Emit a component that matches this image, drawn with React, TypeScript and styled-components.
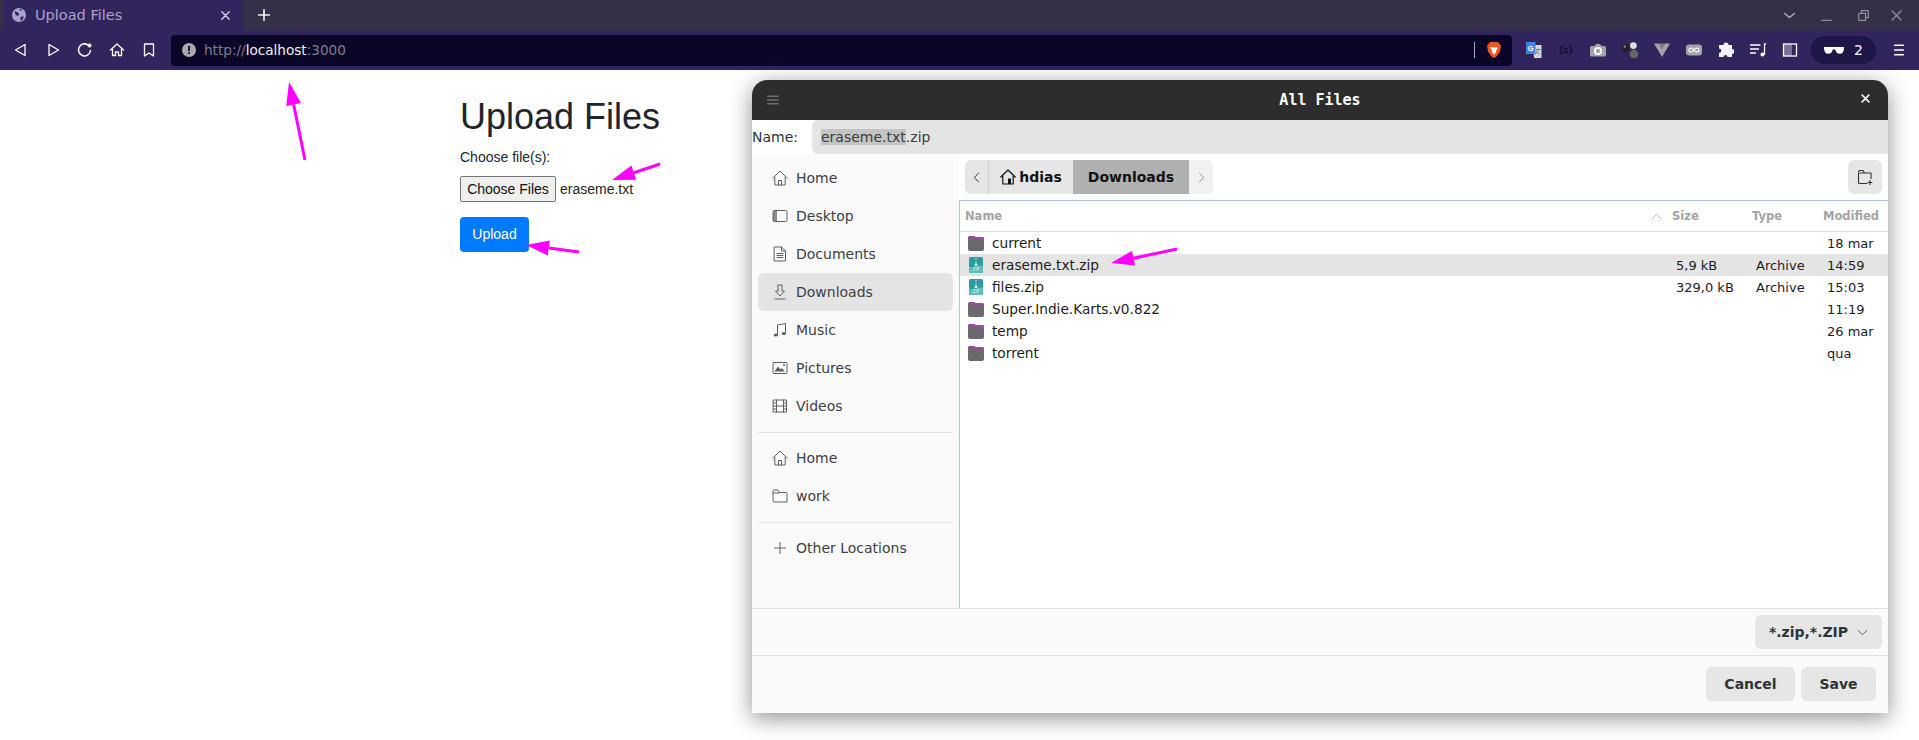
import React from "react";
import styled, { createGlobalStyle } from "styled-components";

const GlobalStyle = createGlobalStyle`
  html, body { margin: 0; padding: 0; background: #fff; }
  body { width: 1919px; height: 740px; overflow: hidden; font-family: "Liberation Sans", Arial, sans-serif; }
`;

const Page = styled.div`
  position: relative;
  width: 1919px;
  height: 740px;
  overflow: hidden;
`;

/* browser chrome */
const TabStrip = styled.div`
  height: 30px;
  background: #353048;
  display: flex;
  padding-left: 3px;
  align-items: stretch;
`;
const Tab = styled.div`
  width: 240px;
  background: #32255e;
  border-radius: 4px 4px 0 0;
  display: flex;
  align-items: center;
  padding: 0 13px 0 9px;
  box-sizing: border-box;
  color: #a9a3cc;
  font: 14.5px "DejaVu Sans", sans-serif;
`;
const TabTitle = styled.span`
  flex: 1;
  margin-left: 9px;
`;
const NewTab = styled.div`
  width: 40px;
  display: flex;
  align-items: center;
  justify-content: center;
  margin-left: 1px;
`;
const WindowControls = styled.div`
  margin-left: auto;
  display: flex;
  align-items: center;
  padding-right: 8px;
`;
const WinBtn = styled.div<{ $w: number }>`
  width: ${(p) => p.$w}px;
  display: flex;
  justify-content: center;
`;
const Toolbar = styled.div`
  height: 40px;
  background: #32255e;
  display: flex;
  align-items: center;
  padding-left: 5px;
`;
const ToolBtn = styled.div`
  width: 32px;
  height: 32px;
  display: flex;
  align-items: center;
  justify-content: center;
  flex: none;
`;
const UrlBar = styled.div`
  width: 1341px;
  height: 31px;
  margin: 0 6px;
  background: #090628;
  border-radius: 4px;
  display: flex;
  align-items: center;
  padding: 0 10px 0 11px;
  box-sizing: border-box;
  font: 13.6px "DejaVu Sans", sans-serif;
  color: #7f7c8f;
`;
const UrlText = styled.span`
  margin-left: 8px;
  flex: 1;
`;
const UrlHost = styled.span`
  color: #f3f2f8;
`;
const UrlDivider = styled.div`
  width: 1px;
  height: 16px;
  background: #a7a5b3;
  margin-right: 11px;
`;
const ShieldPill = styled.div`
  width: 65px;
  height: 28px;
  margin: 0 7px 0 5px;
  border-radius: 14px;
  background: #1e1647;
  display: flex;
  align-items: center;
  justify-content: center;
  gap: 10px;
  color: #fff;
  font: 14px "DejaVu Sans", sans-serif;
`;

/* page content */
const Content = styled.main`
  padding: 23px 0 0 460px;
  color: #212529;
`;
const Heading = styled.h1`
  margin: 0 0 7px;
  font: 400 36px/47px "Liberation Sans", Arial, sans-serif;
`;
const FieldLabel = styled.label`
  display: block;
  font-size: 14px;
  line-height: 21px;
  margin-bottom: 8px;
`;
const FileRow = styled.div`
  display: flex;
  align-items: center;
  font-size: 14px;
  color: #212529;
  margin-bottom: 15px;
`;
const FileButton = styled.div`
  width: 96px;
  height: 26px;
  box-sizing: border-box;
  border: 1px solid #767676;
  border-radius: 2px;
  background: #efefef;
  color: #111;
  font-size: 14px;
  line-height: 24px;
  text-align: center;
  margin-right: 4px;
`;
const UploadButton = styled.div`
  width: 69px;
  height: 35px;
  background: #007bff;
  border-radius: 4px;
  color: #fff;
  font-size: 14px;
  line-height: 35px;
  text-align: center;
`;

/* file dialog */
const Dialog = styled.section`
  position: absolute;
  left: 752px;
  top: 80px;
  width: 1136px;
  height: 633px;
  background: #fafafa;
  border-radius: 15px 15px 0 0;
  box-shadow: 0 5px 22px rgba(0, 0, 0, 0.45);
  display: flex;
  flex-direction: column;
  font: 14px "DejaVu Sans", sans-serif;
  color: #2e3436;
`;
const TitleBar = styled.header`
  height: 40px;
  flex: none;
  background: #2d2d2d;
  border-radius: 15px 15px 0 0;
  display: flex;
  align-items: center;
  justify-content: center;
  position: relative;
  color: #fff;
  font: 700 15px "DejaVu Sans Mono", monospace;
`;
const TitleIcon = styled.div<{ $side: "left" | "right"; $off: number }>`
  position: absolute;
  ${(p) => p.$side}: ${(p) => p.$off}px;
  top: 14px;
  display: flex;
`;
const NameRow = styled.div`
  height: 34px;
  flex: none;
  display: flex;
  align-items: center;
  background: #fff;
`;
const NameLabel = styled.div`
  width: 60px;
  flex: none;
  color: #2e3436;
`;
const NameInput = styled.div`
  flex: 1;
  height: 34px;
  background: #e4e4e4;
  border-radius: 6px 0 0 6px;
  display: flex;
  align-items: center;
  padding-left: 9px;
  color: #3a3d3f;
`;
const Selected = styled.span`
  background: #c4c4c4;
`;
const Body = styled.div`
  flex: 1;
  display: flex;
  min-height: 0;
  background: #fff;
`;
const Sidebar = styled.nav`
  width: 207px;
  flex: none;
  background: #fafafa;
  padding: 5px 6px 0;
  box-sizing: border-box;
`;
const PlaceItem = styled.div<{ $active?: boolean }>`
  height: 38px;
  margin-bottom: 0;
  display: flex;
  align-items: center;
  gap: 8px;
  padding-left: 14px;
  border-radius: 6px;
  background: ${(p) => (p.$active ? "#e4e4e4" : "transparent")};
  color: #3d4042;
`;
const Separator = styled.div`
  height: 1px;
  background: #e0e0e0;
  margin: 7px 0 6px;
`;
const Main = styled.div`
  flex: 1;
  display: flex;
  flex-direction: column;
  min-width: 0;
`;
const PathRow = styled.div`
  height: 46px;
  flex: none;
  display: flex;
  align-items: flex-start;
  padding: 6px 6px 0 6px;
  box-sizing: border-box;
  background: #fff;
`;
const PathGroup = styled.div`
  display: flex;
  height: 34px;
  border-radius: 6px;
  overflow: hidden;
  background: #e6e6e6;
`;
const PathSeg = styled.div<{ $w: number; $active?: boolean; $dim?: boolean; $line?: boolean }>`
  width: ${(p) => p.$w}px;
  display: flex;
  align-items: center;
  justify-content: center;
  gap: 3px;
  font-weight: 700;
  font-size: 14px;
  color: #111;
  background: ${(p) => (p.$active ? "#b0b0b0" : p.$dim ? "#f0f0f0" : "#e6e6e6")};
  border-right: ${(p) => (p.$line ? "1px solid #cfcfcf" : "none")};
  box-sizing: border-box;
`;
const NewFolderBtn = styled.div`
  margin-left: auto;
  width: 34px;
  height: 34px;
  border-radius: 6px;
  background: #e6e6e6;
  display: flex;
  align-items: center;
  justify-content: center;
`;
const ListFrame = styled.div`
  flex: 1;
  border-top: 1px solid #a6c6e8;
  border-left: 1px solid #a6c6e8;
  margin-left: 0;
  background: #fff;
  min-height: 0;
`;
const columns = "712px 80px 71px 64px";
const HeaderRow = styled.div`
  height: 31px;
  display: grid;
  grid-template-columns: ${columns};
  align-items: center;
  border-bottom: 1px solid #dcdcdc;
  box-sizing: border-box;
  font-weight: 700;
  font-size: 11.5px;
  color: #a3a3a3;
`;
const NameHead = styled.div`
  padding-left: 5px;
  display: flex;
  justify-content: space-between;
  align-items: center;
  padding-right: 10px;
`;
const FileRowItem = styled.div<{ $selected?: boolean }>`
  height: 22px;
  display: grid;
  grid-template-columns: ${columns};
  align-items: center;
  background: ${(p) => (p.$selected ? "#e4e4e4" : "transparent")};
  color: #1c1c1c;
  font-size: 13.7px;
`;
const NameCell = styled.div`
  display: flex;
  align-items: center;
  gap: 8px;
  padding-left: 8px;
`;
const MetaCell = styled.div`
  padding-left: 4px;
  white-space: nowrap;
  font-size: 13px;
`;
const FilterRow = styled.div`
  height: 47px;
  flex: none;
  border-top: 1px solid #e0e0e0;
  box-sizing: border-box;
  display: flex;
  justify-content: flex-end;
  align-items: flex-start;
  padding: 6px 6px 0 0;
`;
const FilterButton = styled.div`
  width: 127px;
  height: 34px;
  background: #e6e6e6;
  border-radius: 6px;
  display: flex;
  align-items: center;
  justify-content: center;
  gap: 9px;
  font-weight: 700;
  font-size: 14px;
  color: #2e3436;
`;
const ActionRow = styled.footer`
  height: 58px;
  flex: none;
  border-top: 1px solid #e0e0e0;
  box-sizing: border-box;
  display: flex;
  justify-content: flex-end;
  gap: 6px;
  padding: 11px 12px 0 0;
`;
const ActionButton = styled.div<{ $w: number }>`
  width: ${(p) => p.$w}px;
  height: 34px;
  background: #e6e6e6;
  border-radius: 6px;
  font-weight: 700;
  font-size: 14px;
  line-height: 34px;
  text-align: center;
  color: #2e3436;
`;
const ArrowLayer = styled.svg`
  position: absolute;
  inset: 0;
  pointer-events: none;
`;

const stroke = {
  fill: "none",
  stroke: "currentColor",
  strokeWidth: 1.3,
  strokeLinecap: "round" as const,
  strokeLinejoin: "round" as const,
};

const Icon = ({ size = 16, color = "#fff", children, box = 16 }: { size?: number; color?: string; children: React.ReactNode; box?: number }) => (
  <svg width={size} height={size} viewBox={`0 0 ${box} ${box}`} style={{ color, flex: "none" }}>
    {children}
  </svg>
);

const Globe = () => (
  <Icon size={14} color="#a9a3cc">
    <circle cx="8" cy="8" r="8" fill="#a9a3cc" />
    <path d="M3 3.5l4 1.5 1.5 2.500L6 9 4 7.500zM10 10l3.500-.5L12 13.500 9.500 14.500z" fill="#32255e" />
    <path d="M8 1l3.500.5L10 3.500z" fill="#32255e" />
  </Icon>
);
const PlaceIcon = ({ name }: { name: string }) => {
  const c = "#5d6062";
  const paths: Record<string, React.ReactNode> = {
    home: <path {...stroke} strokeWidth={1} d="M.8 8L8 1l7.200 7M2.800 7v8h10.400V7M6.500 15v-4.500h3V15" />,
    desktop: (
      <g>
        <rect x="1" y="2.500" width="14" height="11" rx="1.500" {...stroke} strokeWidth={1} />
        <path d="M1 4a1.500 1.500 0 0 1 1.500-1.500H5v11H2.500A1.500 1.500 0 0 1 1 12z" fill="currentColor" opacity=".7" />
      </g>
    ),
    documents: <path {...stroke} strokeWidth={1} d="M2.500 1h7l4 4v10h-11zM9.500 1v4h4M5 7.500h6M5 9.500h6M5 11.500h6" />,
    downloads: <path {...stroke} strokeWidth={1} d="M6 1h4v6h2.500L8 12 3.500 7H6zM3 15h10" />,
    music: (
      <g>
        <path {...stroke} strokeWidth={1} d="M5.500 13V3l8-1.500V11" />
        <ellipse cx="3.800" cy="13" rx="2" ry="1.500" fill="currentColor" />
        <ellipse cx="11.800" cy="11.500" rx="2" ry="1.500" fill="currentColor" />
      </g>
    ),
    pictures: (
      <g>
        <rect x="1" y="2.500" width="14" height="11" rx="1" {...stroke} strokeWidth={1} />
        <path d="M2.500 11.500L6 6.500l2.500 3L10 8l2.500 3.500z" fill="currentColor" />
        <circle cx="12" cy="5" r="1" fill="currentColor" />
      </g>
    ),
    videos: <path {...stroke} strokeWidth={1} d="M1.500 2h13v12h-13zM4.500 2v12M11.500 2v12M1.500 5h3M1.500 8h3M1.500 11h3M11.500 5h3M11.500 8h3M11.500 11h3M4.500 8h7" />,
    folder: <path {...stroke} strokeWidth={1} d="M1 3a1 1 0 0 1 1-1h4l1.500 2.500H14a1 1 0 0 1 1 1V14H2a1 1 0 0 1-1-1zM1 5h6.500" />,
    plus: <path {...stroke} strokeWidth={1} d="M8 2.500v11M2.500 8h11" />,
  };
  return <Icon color={c}>{paths[name]}</Icon>;
};
const FolderIcon = () => (
  <Icon>
    <path d="M0 3a2 2 0 0 1 2-2h4l1.500 1H14a2 2 0 0 1 2 2v10a2 2 0 0 1-2 2H2a2 2 0 0 1-2-2z" fill="#6d6a6f" />
    <path d="M0 3a2 2 0 0 1 2-2h4l1.500 1H14a2 2 0 0 1 2 2v.500H8L6.500 3.500H0z" fill="#9a4a9e" />
  </Icon>
);
const ZipIcon = () => (
  <Icon>
    <rect x="1" y="0" width="14" height="16" rx="1.500" fill="#2f9c9c" />
    <path d="M1 9.500C5 12 11 7 15 9v5.500a1.500 1.500 0 0 1-1.500 1.500h-11A1.500 1.500 0 0 1 1 14.500z" fill="#5dbdb9" />
    <path d="M8 1v1.500M8 4v1.500M7 7h2v1.500H7z" stroke="#fff" strokeWidth=".9" fill="none" />
    <text x="8" y="14.200" textAnchor="middle" fontSize="4.500" fontFamily="Liberation Sans" fill="#d8f3f2">ZIP</text>
  </Icon>
);
const Arrow = ({ x1, y1, x2, y2, head = 23, width = 15 }: { x1: number; y1: number; x2: number; y2: number; head?: number; width?: number }) => {
  const len = Math.hypot(x2 - x1, y2 - y1);
  const ux = (x2 - x1) / len;
  const uy = (y2 - y1) / len;
  const bx = x2 - ux * head;
  const by = y2 - uy * head;
  const pts = `${x2},${y2} ${bx - (uy * width) / 2},${by + (ux * width) / 2} ${bx + (uy * width) / 2},${by - (ux * width) / 2}`;
  return (
    <g>
      <line x1={x1} y1={y1} x2={bx} y2={by} stroke="#ff00ff" strokeWidth="3" />
      <polygon points={pts} fill="#ff00ff" />
    </g>
  );
};

const places = [
  { icon: "home", label: "Home" },
  { icon: "desktop", label: "Desktop" },
  { icon: "documents", label: "Documents" },
  { icon: "downloads", label: "Downloads", active: true },
  { icon: "music", label: "Music" },
  { icon: "pictures", label: "Pictures" },
  { icon: "videos", label: "Videos" },
];

const files = [
  { name: "current", modified: "18 mar" },
  { name: "eraseme.txt.zip", size: "5,9 kB", type: "Archive", modified: "14:59", zip: true, selected: true },
  { name: "files.zip", size: "329,0 kB", type: "Archive", modified: "15:03", zip: true },
  { name: "Super.Indie.Karts.v0.822", modified: "11:19" },
  { name: "temp", modified: "26 mar" },
  { name: "torrent", modified: "qua" },
];

export default function App() {
  return (
    <Page>
      <GlobalStyle />
      <TabStrip>
        <Tab>
          <Globe />
          <TabTitle>Upload Files</TabTitle>
          <Icon size={9} color="#d0cde0">
            <path {...stroke} strokeWidth={2.600} d="M1.500 1.500l13 13M14.500 1.500l-13 13" />
          </Icon>
        </Tab>
        <NewTab>
          <Icon size={12} color="#f2f2f2">
            <path {...stroke} strokeWidth={2.200} d="M8 1v14M1 8h14" />
          </Icon>
        </NewTab>
        <WindowControls>
          <WinBtn $w={37}>
            <Icon size={11} color="#b8b6c2"><path {...stroke} strokeWidth={1.800} d="M1 5l7 6 7-6" /></Icon>
          </WinBtn>
          <WinBtn $w={37}>
            <Icon size={11} color="#8f8c9c"><path {...stroke} strokeWidth={1.800} d="M1 15h14" /></Icon>
          </WinBtn>
          <WinBtn $w={37}>
            <Icon size={11} color="#8f8c9c"><path {...stroke} strokeWidth={1.800} d="M1 5h10v10H1zM5 5V1h10v10h-4" /></Icon>
          </WinBtn>
          <WinBtn $w={29}>
            <Icon size={11} color="#8f8c9c"><path {...stroke} strokeWidth={2} d="M1.500 1.500l13 13M14.500 1.500l-13 13" /></Icon>
          </WinBtn>
        </WindowControls>
      </TabStrip>
      <Toolbar>
        <ToolBtn><Icon><path {...stroke} d="M12 2.500v11L2.500 8z" /></Icon></ToolBtn>
        <ToolBtn><Icon><path {...stroke} d="M4 2.500v11L13.500 8z" /></Icon></ToolBtn>
        <ToolBtn>
          <Icon>
            <path {...stroke} strokeWidth={1.500} d="M13.500 8.500A6 6 0 1 1 11 3" />
            <circle cx="12.500" cy="3.500" r="2" fill="#fff" />
          </Icon>
        </ToolBtn>
        <ToolBtn><Icon><path {...stroke} d="M1.500 8L8 2l6.500 6M3.500 7v6.500h3V10h3v3.500h3V7" /></Icon></ToolBtn>
        <ToolBtn><Icon><path {...stroke} d="M3.500 2h9v12L8 11l-4.500 3z" /></Icon></ToolBtn>
        <UrlBar>
          <Icon size={14} color="#a8a8ad">
            <circle cx="8" cy="8" r="8" fill="#a8a8ad" />
            <path d="M8 3.500v5.500" stroke="#090628" strokeWidth="2" />
            <circle cx="8" cy="11.500" r="1.200" fill="#090628" />
          </Icon>
          <UrlText>http://<UrlHost>localhost</UrlHost>:3000</UrlText>
          <UrlDivider />
          <Icon>
            <path d="M4 0h8l2 2.500 1 1-1 6-3.500 5L8 16l-2.500-1.500L2 9.500l-1-6 1-1z" fill="#f1561d" />
            <path d="M4 5l3 .5h2L12 5l-1.500 3L9.500 11 8 12.500 6.500 11 5.500 8z" fill="#fff" />
          </Icon>
        </UrlBar>
        <ToolBtn>
          <Icon>
            <path d="M7 3h8.500v13H8z" fill="#d8d8d8" />
            <path d="M10 7.500h4.500M12 6.500c0 3-1 5-3 6M10.500 9c.7 1.700 2 2.800 3.500 3.300" stroke="#6a7a80" strokeWidth=".9" fill="none" />
            <rect x="0" y="0" width="9.500" height="12" fill="#3f84ea" />
            <text x="4.700" y="8.500" textAnchor="middle" fontSize="7.500" fontWeight="700" fontFamily="Liberation Sans" fill="#fff">G</text>
          </Icon>
        </ToolBtn>
        <ToolBtn>
          <Icon size={14} color="#17132e">
            <text x="8" y="11.500" textAnchor="middle" fontSize="9.500" fontWeight="700" fontFamily="DejaVu Sans Mono" fill="#0d0a1c">{"{≡}"}</text>
          </Icon>
        </ToolBtn>
        <ToolBtn>
          <Icon>
            <path d="M1.500 4h3l1.500-2h4l1.500 2h3a1.500 1.500 0 0 1 1.500 1.500V13a1.500 1.500 0 0 1-1.500 1.500h-13A1.500 1.500 0 0 1 0 13V5.500A1.500 1.500 0 0 1 1.500 4z" fill="#a3a3a8" />
            <circle cx="8" cy="9" r="3.200" fill="none" stroke="#fff" strokeWidth="1.800" />
          </Icon>
        </ToolBtn>
        <ToolBtn>
          <Icon size={18}>
            <circle cx="11" cy="4" r="3" fill="#ddd" />
            <circle cx="11.500" cy="11.500" r="3.800" fill="#666" />
            <circle cx="4" cy="6" r="3.500" fill="#222" />
            <circle cx="3.300" cy="5" r="1" fill="#999" />
          </Icon>
        </ToolBtn>
        <ToolBtn><Icon><path d="M0 1.500h5L8 7l3-5.500h5L8 15z" fill="#a3a3a8" /><path d="M5 1.500h6L8 7z" fill="#7f7f88" /></Icon></ToolBtn>
        <ToolBtn>
          <Icon>
            <rect x="0" y="2.500" width="16" height="11" rx="3" fill="#a3a3a8" />
            <path d="M8 8c-1-1.500-2-2-3-2a2 2 0 0 0 0 4c1 0 2-.5 3-2s2-2 3-2a2 2 0 0 1 0 4c-1 0-2-.5-3-2z" fill="none" stroke="#fff" strokeWidth="1.100" />
          </Icon>
        </ToolBtn>
        <ToolBtn>
          <Icon>
            <path d="M5.500 3a2.500 2.500 0 0 1 5 0H14v4a2.500 2.500 0 0 1 0 5v3H9.500a2 2 0 0 0-4 0H1v-4a2.200 2.200 0 0 0 0-4.500V3z" fill="#f4f3f8" />
          </Icon>
        </ToolBtn>
        <ToolBtn>
          <Icon>
            <path {...stroke} strokeWidth={1.300} d="M.5 3h9.500M.5 7h8M.5 11h5M14.500 2v10M14.500 2h1.500" />
            <circle cx="12.500" cy="12.500" r="2" fill="#fff" />
          </Icon>
        </ToolBtn>
        <ToolBtn>
          <Icon>
            <rect x="1.500" y="2" width="13" height="12" fill="none" stroke="#fff" strokeWidth="1.300" />
            <rect x="1.500" y="2" width="8.500" height="12" fill="#fff" opacity=".35" />
          </Icon>
        </ToolBtn>
        <ShieldPill>
          <Icon size={20}>
            <path d="M0 5.500h16v1.500c-.5 3-1.500 4-3.500 4S9.500 9.500 9 7.500H7C6.500 9.500 5.500 11 3.500 11S.5 10 0 7z" fill="#fff" />
          </Icon>
          2
        </ShieldPill>
        <ToolBtn>
          <Icon size={14}>
            <path {...stroke} strokeWidth={1.600} d="M3 2.500h10M3 8h10M3 13.500h10" />
          </Icon>
        </ToolBtn>
      </Toolbar>

      <Content>
        <Heading>Upload Files</Heading>
        <FieldLabel>Choose file(s):</FieldLabel>
        <FileRow>
          <FileButton>Choose Files</FileButton>
          eraseme.txt
        </FileRow>
        <UploadButton>Upload</UploadButton>
      </Content>

      <Dialog>
        <TitleBar>
          <TitleIcon $side="left" $off={15}>
            <Icon size={12} color="#6f6f6f"><path {...stroke} strokeWidth={1.800} d="M1 3h14M1 8h14M1 13h14" /></Icon>
          </TitleIcon>
          All Files
          <TitleIcon $side="right" $off={18}>
            <Icon size={9} color="#fff"><path {...stroke} strokeWidth={2.800} d="M2 2l12 12M14 2L2 14" /></Icon>
          </TitleIcon>
        </TitleBar>
        <NameRow>
          <NameLabel>Name:</NameLabel>
          <NameInput><Selected>eraseme.txt</Selected>.zip</NameInput>
        </NameRow>
        <Body>
          <Sidebar>
            {places.map((p) => (
              <PlaceItem key={p.label} $active={p.active}>
                <PlaceIcon name={p.icon} />
                {p.label}
              </PlaceItem>
            ))}
            <Separator />
            <PlaceItem><PlaceIcon name="home" />Home</PlaceItem>
            <PlaceItem><PlaceIcon name="folder" />work</PlaceItem>
            <Separator />
            <PlaceItem><PlaceIcon name="plus" />Other Locations</PlaceItem>
          </Sidebar>
          <Main>
            <PathRow>
              <PathGroup>
                <PathSeg $w={24} $line>
                  <Icon size={11} color="#222"><path {...stroke} strokeWidth={1.300} d="M11 1.500L5 8l6 6.500" /></Icon>
                </PathSeg>
                <PathSeg $w={84}>
                  <Icon color="#111"><path {...stroke} strokeWidth={1.200} d="M.8 8L8 1l7.200 7M2.800 6.500V15h10.400V6.500" /><rect x="8" y="9.500" width="3" height="5.500" fill="#111" /></Icon>
                  hdias
                </PathSeg>
                <PathSeg $w={116} $active>Downloads</PathSeg>
                <PathSeg $w={24} $dim>
                  <Icon size={11} color="#8a8a8a"><path {...stroke} strokeWidth={1.300} d="M5 1.500L11 8l-6 6.500" /></Icon>
                </PathSeg>
              </PathGroup>
              <NewFolderBtn>
                <Icon color="#2e3436"><path {...stroke} strokeWidth={1.100} d="M1.500 2.500a1 1 0 0 1 1-1h3.500L7.500 4H14v5.500M1.500 4v9.500a1 1 0 0 0 1 1H10M1.500 4H7.500M13 11.500v4M11 13.500h4" /></Icon>
              </NewFolderBtn>
            </PathRow>
            <ListFrame>
              <HeaderRow>
                <NameHead>
                  Name
                  <Icon size={11} color="#a3a3a3"><path {...stroke} strokeWidth={1.200} d="M2 11l6-6 6 6" /></Icon>
                </NameHead>
                <div>Size</div>
                <div>Type</div>
                <div>Modified</div>
              </HeaderRow>
              {files.map((f) => (
                <FileRowItem key={f.name} $selected={f.selected}>
                  <NameCell>
                    {f.zip ? <ZipIcon /> : <FolderIcon />}
                    {f.name}
                  </NameCell>
                  <MetaCell>{f.size}</MetaCell>
                  <MetaCell>{f.type}</MetaCell>
                  <MetaCell>{f.modified}</MetaCell>
                </FileRowItem>
              ))}
            </ListFrame>
          </Main>
        </Body>
        <FilterRow>
          <FilterButton>
            *.zip,*.ZIP
            <Icon size={11} color="#444"><path {...stroke} strokeWidth={1.200} d="M1.500 5l6.500 6 6.500-6" /></Icon>
          </FilterButton>
        </FilterRow>
        <ActionRow>
          <ActionButton $w={89}>Cancel</ActionButton>
          <ActionButton $w={75}>Save</ActionButton>
        </ActionRow>
      </Dialog>

      <ArrowLayer width="1919" height="740">
        <Arrow x1={305} y1={160} x2={289} y2={82} />
        <Arrow x1={660} y1={164} x2={612} y2={180} />
        <Arrow x1={579} y1={252} x2={526} y2={245} />
        <Arrow x1={1177} y1={249} x2={1111} y2={263} />
      </ArrowLayer>
    </Page>
  );
}
